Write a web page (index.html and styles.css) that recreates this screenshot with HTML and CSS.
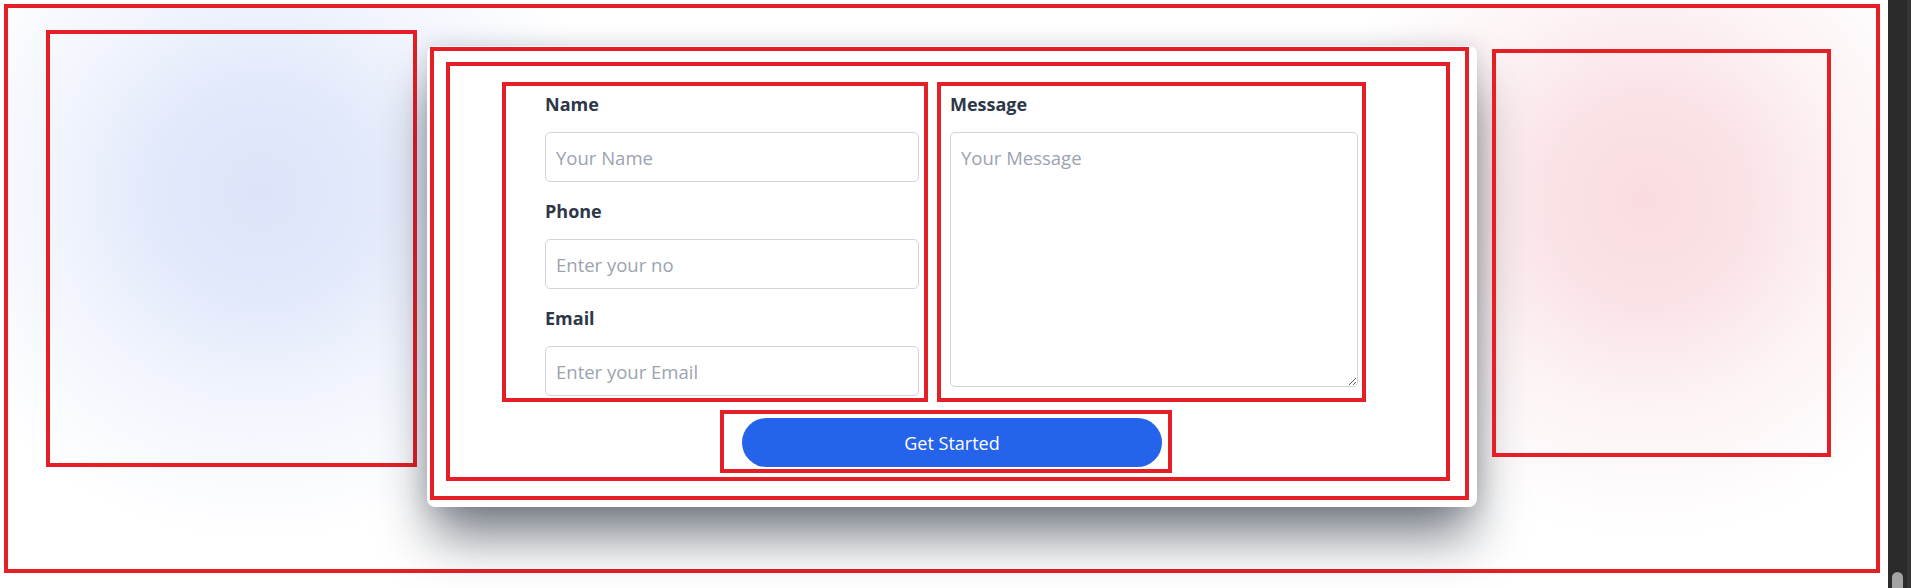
FILE: index.html
```html
<!DOCTYPE html>
<html lang="en">
<head>
<meta charset="utf-8">
<title>Contact form</title>
<link rel="stylesheet" href="styles.css">
</head>
<body>
<div class="page">
  <main class="viewport">
    <section class="hero">
      <div class="blob blob-blue"></div>
      <div class="card">
        <div class="card-frame">
          <form class="form">
            <div class="fields">
              <div class="col col-left">
                <div class="field">
                  <label class="label" for="name">Name</label>
                  <input class="input" id="name" type="text" placeholder="Your Name">
                </div>
                <div class="field">
                  <label class="label" for="phone">Phone</label>
                  <input class="input" id="phone" type="text" placeholder="Enter your no">
                </div>
                <div class="field">
                  <label class="label" for="email">Email</label>
                  <input class="input" id="email" type="email" placeholder="Enter your Email">
                </div>
              </div>
              <div class="col col-right">
                <label class="label" for="message">Message</label>
                <textarea class="textarea" id="message" placeholder="Your Message"></textarea>
              </div>
            </div>
            <div class="actions">
              <button class="btn" type="button">Get Started</button>
            </div>
          </form>
        </div>
      </div>
      <div class="blob blob-red"></div>
    </section>
  </main>
  <div class="scrollbar"><div class="thumb"></div></div>
</div>
</body>
</html>
```

FILE: styles.css
```css
* { box-sizing: border-box; }

html, body {
  margin: 0;
  padding: 0;
  background: #ffffff;
}

body {
  font-family: "Open Sans", "Noto Sans", sans-serif;
  color: #2d3748;
}

.page {
  display: flex;
  width: 1911px;
  height: 588px;
  overflow: hidden;
}

.viewport {
  flex: 1;
  background: #ffffff;
}

.scrollbar {
  width: 23px;
  background: #2b2b2b;
  border-right: 4px solid #363636;
  display: flex;
  flex-direction: column;
  justify-content: flex-end;
}

.thumb {
  width: 11px;
  height: 16px;
  margin-left: 4px;
  border-radius: 6px 6px 0 0;
  background: #a3a3a3;
}

.hero {
  margin: 4px 0 0 4px;
  width: 1876px;
  height: 569px;
  border: 4px solid #e61e25;
  display: flex;
  align-items: flex-start;
  background:
    radial-gradient(ellipse 350px 350px at 253px 184px,
      rgba(220, 228, 250, 1) 0%,
      rgba(223, 231, 250, 0.92) 30%,
      rgba(233, 238, 252, 0.6) 60%,
      rgba(255, 255, 255, 0) 100%),
    radial-gradient(ellipse 330px 340px at 1639px 192px,
      rgba(250, 220, 224, 1) 0%,
      rgba(250, 224, 228, 0.92) 30%,
      rgba(251, 235, 237, 0.6) 60%,
      rgba(255, 255, 255, 0) 100%),
    #ffffff;
}

.blob {
  border: 4px solid #e61e25;
  flex: none;
}

.blob-blue {
  width: 371px;
  height: 437px;
  margin: 22px 0 0 38px;
}

.blob-red {
  width: 339px;
  height: 408px;
  margin: 41px 0 0 15px;
}

.card {
  flex: none;
  width: 1050px;
  height: 461px;
  margin: 38px 0 0 10px;
  padding: 1px 8px 7px 3px;
  background: #ffffff;
  border-radius: 8px;
  box-shadow: 0 34px 52px -6px rgba(31, 41, 55, 0.62), 0 0 22px rgba(31, 41, 55, 0.15);
}

.card-frame {
  height: 100%;
  border: 4px solid #e61e25;
  padding: 11px 15px 15px 12px;
}

.form {
  height: 100%;
  margin: 0;
  border: 4px solid #e61e25;
  padding: 16px 80px 4px 52px;
  display: flex;
  flex-direction: column;
  align-items: flex-start;
}

.fields {
  display: flex;
  gap: 9px;
}

.col {
  border: 4px solid #e61e25;
}

.col-left {
  width: 426px;
  padding: 4px 5px 2px 39px;
}

.col-right {
  width: 429px;
  padding: 4px 4px 0 9px;
}

.field + .field {
  margin-top: 15px;
}

.label {
  display: block;
  font-size: 18px;
  font-weight: 700;
  line-height: 28px;
  margin-bottom: 14px;
  color: #2d3748;
}

.input {
  display: block;
  width: 100%;
  height: 50px;
  margin: 0;
  padding: 0 10px;
  border: 1px solid #d1d5db;
  border-radius: 5px;
  font-family: "Open Sans", "Noto Sans", sans-serif;
  font-size: 18.5px;
  color: #2d3748;
  background: #ffffff;
  outline: none;
}

.textarea {
  display: block;
  width: 100%;
  height: 255px;
  margin: 0;
  padding: 13px 10px;
  border: 1px solid #d1d5db;
  border-radius: 5px;
  font-family: "Open Sans", "Noto Sans", sans-serif;
  font-size: 18.5px;
  line-height: 24px;
  color: #2d3748;
  background: #ffffff;
  outline: none;
}

.input::placeholder,
.textarea::placeholder {
  color: #9ca3af;
  opacity: 1;
}

.actions {
  margin: 8px 0 0 218px;
  width: 452px;
  height: 63px;
  border: 4px solid #e61e25;
  padding: 4px 6px 2px 18px;
}

.btn {
  display: block;
  width: 420px;
  height: 49px;
  border: none;
  border-radius: 9999px;
  background: #2563eb;
  color: #ffffff;
  font-family: "Open Sans", "Noto Sans", sans-serif;
  font-size: 18px;
  cursor: pointer;
}
```
